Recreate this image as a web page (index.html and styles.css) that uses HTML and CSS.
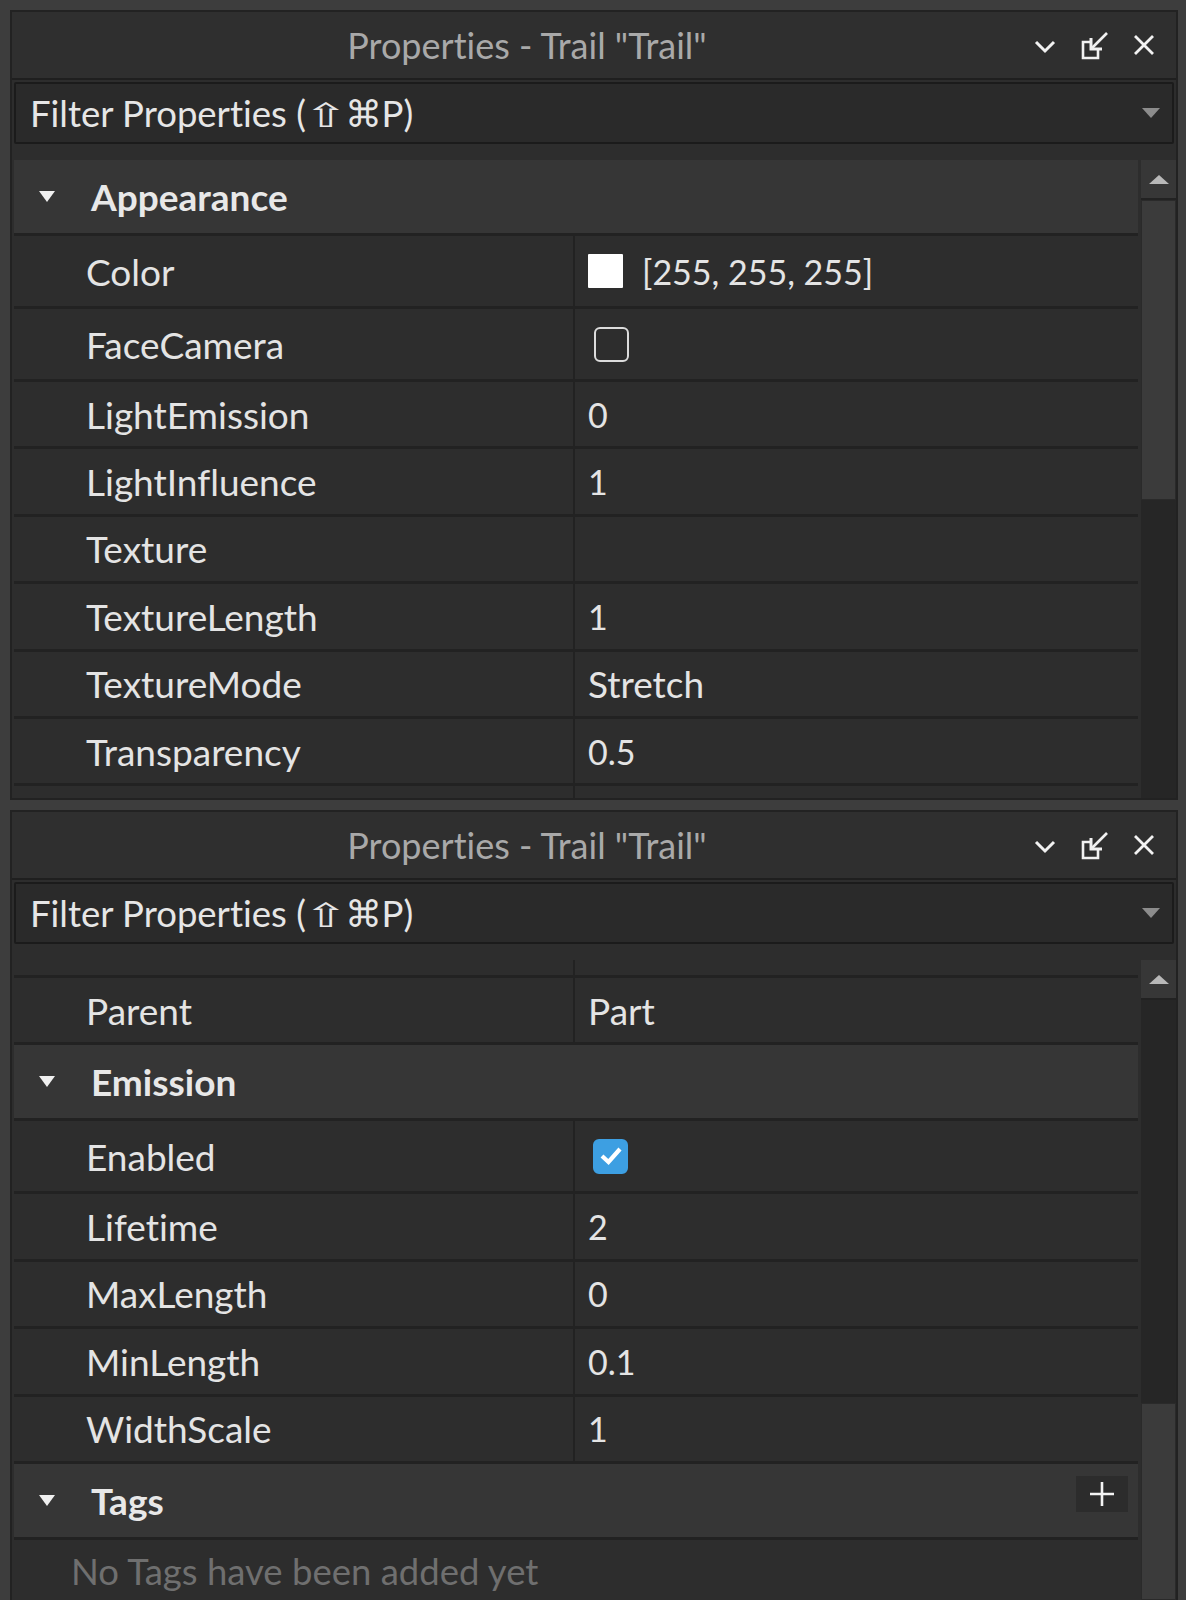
FILE: index.html
```html
<!DOCTYPE html>
<html lang="en">
<head>
<meta charset="utf-8">
<title>Properties - Trail</title>
<link rel="stylesheet" href="styles.css">
</head>
<body>
<div class="window">
  <section class="panel panel-top">
    <header class="titlebar">
      <div class="title">Properties - Trail "Trail"</div>
      <div class="tb-icons">
        <svg class="ic-chev" width="22" height="14" viewBox="0 0 22 14"><polyline points="2,2 11,11 20,2" fill="none" stroke="#f2f2f2" stroke-width="3"/></svg>
        <svg class="ic-dock" width="32" height="32" viewBox="0 0 32 32"><path d="M13 12 H5 V28 H20 V20" fill="none" stroke="#f2f2f2" stroke-width="2.6"/><path d="M29 3 L14 18" stroke="#f2f2f2" stroke-width="2.6"/><path d="M13 8 V19 H24" fill="none" stroke="#f2f2f2" stroke-width="3"/></svg>
        <svg class="ic-close" width="24" height="24" viewBox="0 0 24 24"><path d="M3 3 L21 21 M21 3 L3 21" stroke="#f2f2f2" stroke-width="2.8"/></svg>
      </div>
    </header>
    <div class="filter">
      <span class="filter-text">Filter Properties (<span class="sym">⇧</span>⌘P)</span>
      <span class="drop-tri"></span>
    </div>
    <div class="body-wrap">
      <div class="props">
        <div class="cat"><span class="cat-tri"></span><span class="cat-name">Appearance</span></div>
        <div class="row tall"><div class="name">Color</div><div class="val"><span class="swatch"></span><span class="swatch-text num">[255, 255, 255]</span></div></div>
        <div class="row tall"><div class="name">FaceCamera</div><div class="val"><span class="check"></span></div></div>
        <div class="row"><div class="name">LightEmission</div><div class="val num">0</div></div>
        <div class="row"><div class="name">LightInfluence</div><div class="val num">1</div></div>
        <div class="row"><div class="name">Texture</div><div class="val"></div></div>
        <div class="row"><div class="name">TextureLength</div><div class="val num">1</div></div>
        <div class="row"><div class="name">TextureMode</div><div class="val">Stretch</div></div>
        <div class="row"><div class="name">Transparency</div><div class="val num">0.5</div></div>
        <div class="row"><div class="name"></div><div class="val"></div></div>
      </div>
      <div class="scrollbar">
        <div class="sb-btn"><span class="sb-tri"></span></div>
        <div class="sb-thumb top-thumb"></div>
        <div class="sb-track"></div>
      </div>
    </div>
  </section>
  <div class="splitter"></div>
  <section class="panel panel-bottom">
    <header class="titlebar">
      <div class="title">Properties - Trail "Trail"</div>
      <div class="tb-icons">
        <svg class="ic-chev" width="22" height="14" viewBox="0 0 22 14"><polyline points="2,2 11,11 20,2" fill="none" stroke="#f2f2f2" stroke-width="3"/></svg>
        <svg class="ic-dock" width="32" height="32" viewBox="0 0 32 32"><path d="M13 12 H5 V28 H20 V20" fill="none" stroke="#f2f2f2" stroke-width="2.6"/><path d="M29 3 L14 18" stroke="#f2f2f2" stroke-width="2.6"/><path d="M13 8 V19 H24" fill="none" stroke="#f2f2f2" stroke-width="3"/></svg>
        <svg class="ic-close" width="24" height="24" viewBox="0 0 24 24"><path d="M3 3 L21 21 M21 3 L3 21" stroke="#f2f2f2" stroke-width="2.8"/></svg>
      </div>
    </header>
    <div class="filter">
      <span class="filter-text">Filter Properties (<span class="sym">⇧</span>⌘P)</span>
      <span class="drop-tri"></span>
    </div>
    <div class="body-wrap">
      <div class="props">
        <div class="row partial"><div class="name"></div><div class="val"></div></div>
        <div class="row"><div class="name">Parent</div><div class="val">Part</div></div>
        <div class="cat"><span class="cat-tri"></span><span class="cat-name">Emission</span></div>
        <div class="row tall"><div class="name">Enabled</div><div class="val"><span class="check on"><svg width="24" height="20" viewBox="0 0 24 20"><polyline points="3,10 9.5,16 21,3" fill="none" stroke="#ffffff" stroke-width="4.2"/></svg></span></div></div>
        <div class="row"><div class="name">Lifetime</div><div class="val num">2</div></div>
        <div class="row"><div class="name">MaxLength</div><div class="val num">0</div></div>
        <div class="row"><div class="name">MinLength</div><div class="val num">0.1</div></div>
        <div class="row"><div class="name">WidthScale</div><div class="val num">1</div></div>
        <div class="cat"><span class="cat-tri"></span><span class="cat-name">Tags</span><span class="add-btn"><svg width="26" height="26" viewBox="0 0 26 26"><path d="M13 1 V25 M1 13 H25" stroke="#f4f4f4" stroke-width="2.6"/></svg></span></div>
        <div class="empty">No Tags have been added yet</div>
      </div>
      <div class="scrollbar">
        <div class="sb-btn"><span class="sb-tri"></span></div>
        <div class="sb-track bottom-track"></div>
        <div class="sb-thumb bottom-thumb"></div>
      </div>
    </div>
  </section>
</div>
</body>
</html>
```
FILE: styles.css
```css
* { box-sizing: border-box; }

html, body {
  margin: 0;
  padding: 0;
}

body {
  width: 1186px;
  height: 1600px;
  overflow: hidden;
  background: #3d3d3d;
  font-family: Lato, "Noto Sans", sans-serif;
  font-variant-ligatures: none;
  font-feature-settings: "liga" 0, "clig" 0;
  color: #e4e4e4;
}

.window {
  height: 1600px;
  padding: 10px 8px 0 10px;
  display: flex;
  flex-direction: column;
}

.panel {
  background: #2d2d2d;
  border: 2px solid #222222;
  display: flex;
  flex-direction: column;
  overflow: hidden;
}

.panel-top {
  height: 790px;
  flex: none;
}

.splitter {
  height: 10px;
  flex: none;
}

.panel-bottom {
  flex: 1;
  border-bottom: none;
}

.titlebar {
  height: 68px;
  flex: none;
  display: flex;
  align-items: center;
  background: #2f2f2f;
  border-bottom: 2px solid #1f1f1f;
  padding-right: 20px;
}

.title {
  flex: 1;
  text-align: center;
  font-size: 36px;
  color: #a9a9a9;
  padding-left: 8px;
  white-space: nowrap;
}

.tb-icons {
  display: flex;
  align-items: center;
  gap: 22px;
}

.ic-chev { margin-top: 4px; }
.ic-dock { margin-top: 2px; }

.filter {
  margin: 2px 2px 0 2px;
  height: 62px;
  flex: none;
  display: flex;
  align-items: center;
  justify-content: space-between;
  background: #2a2a2a;
  border: 2px solid #1b1b1b;
  border-radius: 2px;
  padding: 0 10px 0 14px;
}

.filter-text {
  font-size: 36.5px;
  color: #e6e6e6;
  white-space: nowrap;
}

.sym {
  display: inline-block;
  font-family: "DejaVu Sans", sans-serif;
  font-size: 33px;
  transform: scaleX(1.6);
  margin: 0 5px 0 6px;
}

.drop-tri {
  width: 0;
  height: 0;
  border-left: 9px solid transparent;
  border-right: 9px solid transparent;
  border-top: 10px solid #8c8c8c;
  margin-right: 2px;
}

.body-wrap {
  flex: 1;
  display: flex;
  margin-top: 16px;
  padding-left: 2px;
  min-height: 0;
}

.props {
  flex: 1;
  display: flex;
  flex-direction: column;
}

.cat {
  height: 76px;
  flex: none;
  display: flex;
  align-items: center;
  background: #363636;
  border-bottom: 3px solid #222222;
  padding-left: 25px;
}

.cat-tri {
  width: 0;
  height: 0;
  border-left: 8px solid transparent;
  border-right: 8px solid transparent;
  border-top: 11px solid #f0f0f0;
  margin-right: 36px;
}

.cat-name {
  font-size: 37px;
  font-weight: bold;
  color: #e8e8e8;
  flex: 1;
}

.add-btn {
  width: 52px;
  height: 36px;
  background: #2c2c2c;
  display: flex;
  align-items: center;
  justify-content: center;
  margin-right: 10px;
  margin-top: -12px;
}

.row {
  height: 67.4px;
  flex: none;
  display: grid;
  grid-template-columns: 561px 1fr;
  border-bottom: 3px solid #222222;
  font-size: 37px;
}

.row.tall { height: 73px; }
.row.partial { height: 18px; }

.name {
  padding-left: 72px;
  border-right: 2px solid #222222;
  display: flex;
  align-items: center;
  color: #e4e4e4;
  white-space: nowrap;
}

.val {
  padding-left: 13px;
  display: flex;
  align-items: center;
  color: #e4e4e4;
  white-space: nowrap;
}

.num {
  font-size: 34px;
}

.swatch {
  width: 35px;
  height: 34px;
  background: #ffffff;
  border-radius: 1px;
}

.swatch-text { margin-left: 19px; }

.check {
  width: 35px;
  height: 35px;
  margin-left: 6px;
  border: 2.5px solid #dcdcdc;
  border-radius: 6px;
  display: flex;
  align-items: center;
  justify-content: center;
}

.check.on {
  margin-left: 5px;
  background: #3d9fe2;
  border-color: #3d9fe2;
}

.empty {
  height: 62px;
  flex: none;
  display: flex;
  align-items: center;
  padding-left: 57px;
  font-size: 36.5px;
  color: #6f6f6f;
  white-space: nowrap;
}

.scrollbar {
  width: 35px;
  margin-left: 3px;
  flex: none;
  display: flex;
  flex-direction: column;
  background: #262626;
}

.sb-btn {
  height: 40px;
  flex: none;
  background: #373737;
  border-bottom: 2px solid #222222;
  display: flex;
  align-items: center;
  justify-content: center;
}

.sb-tri {
  width: 0;
  height: 0;
  border-left: 10px solid transparent;
  border-right: 10px solid transparent;
  border-bottom: 9px solid #b8b8b8;
}

.sb-thumb {
  background: #3b3b3b;
  border: 1px solid #2a2a2a;
}

.top-thumb { height: 300px; flex: none; }
.sb-track { flex: 1; background: #262626; }
.bottom-track { flex: none; height: 403px; }
.bottom-thumb { flex: 1; }
```
